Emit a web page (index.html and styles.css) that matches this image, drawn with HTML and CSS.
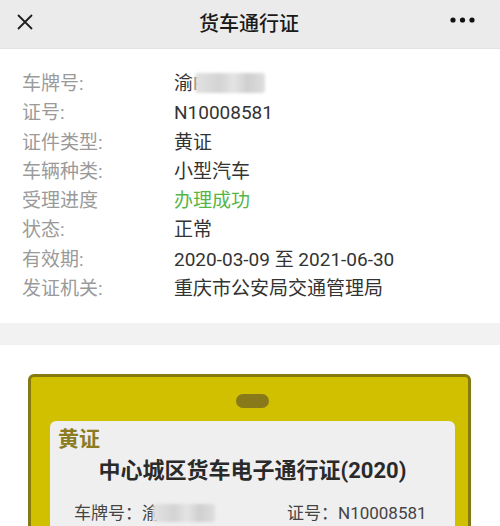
FILE: index.html
```html
<!DOCTYPE html>
<html lang="zh-CN">
<head>
  <meta charset="UTF-8" />
  <meta name="viewport" content="width=device-width, initial-scale=1.0" />
  <title>货车通行证</title>
  <link rel="stylesheet" href="styles.css">
</head>
<body>
  <div class="topbar">
    <svg class="close" width="18" height="18" viewBox="0 0 18 18">
      <path d="M2 2 L16 16 M16 2 L2 16" stroke="#1e1e1e" stroke-width="1.8" fill="none" />
    </svg>
    <div class="title">货车通行证</div>
    <svg class="more" width="26" height="8" viewBox="0 0 26 8">
      <circle cx="3" cy="4" r="2.6" fill="#111" />
      <circle cx="12.5" cy="4" r="2.6" fill="#111" />
      <circle cx="22" cy="4" r="2.6" fill="#111" />
    </svg>
  </div>

  <div class="info">
    <div class="label">车牌号:</div>
    <div class="value">渝F<span class="mask"></span></div>
    <div class="label">证号:</div>
    <div class="value">N10008581</div>
    <div class="label">证件类型:</div>
    <div class="value">黄证</div>
    <div class="label">车辆种类:</div>
    <div class="value">小型汽车</div>
    <div class="label">受理进度</div>
    <div class="value ok">办理成功</div>
    <div class="label">状态:</div>
    <div class="value">正常</div>
    <div class="label">有效期:</div>
    <div class="value">2020-03-09 至 2021-06-30</div>
    <div class="label">发证机关:</div>
    <div class="value">重庆市公安局交通管理局</div>
  </div>

  <div class="gap"></div>

  <div class="pass-wrap">
    <div class="pass">
      <div class="slot"></div>
      <div class="pass-body">
        <div class="kind">黄证</div>
        <div class="pass-title">中心城区货车电子通行证(2020)</div>
        <div class="pass-row">
          <span>车牌号：渝<span class="mask small"></span></span>
          <span class="pass-no">证号：N10008581</span>
        </div>
      </div>
    </div>
  </div>
</body>
</html>
```

FILE: styles.css
```css
html, body {
  overflow: hidden;
}
body {
  margin: 0;
  font-family: Roboto, "Noto Sans CJK SC", sans-serif;
  background: #fff;
  color: #333;
}
.topbar {
  height: 48px;
  background: #ebebeb;
  display: flex;
  align-items: center;
  justify-content: space-between;
  padding: 0 24px 0 16px;
  border-bottom: 1px solid #e2e2e2;
}
.close {
  margin-top: -4px;
}
.title {
  font-size: 20px;
  font-weight: 500;
  color: #1a1a1a;
  margin-left: 14px;
  margin-top: -4px;
}
.more {
  margin-top: -8px;
}
.info {
  display: grid;
  grid-template-columns: 152px 1fr;
  padding: 20px 0 20px 22px;
  font-size: 19px;
  line-height: 29.3px;
}
.label {
  color: #9a9a9a;
}
.value {
  color: #333;
}
.ok {
  color: #55b647;
}
.mask {
  display: inline-block;
  width: 70px;
  height: 20px;
  vertical-align: -3px;
  margin-left: -9px;
  background: linear-gradient(90deg, #e2e2e2 0%, #d3d3d3 35%, #e4e4e4 55%, #cfcfcf 75%, #dedede 100%);
  filter: blur(1.5px);
  border-radius: 3px;
}
.gap {
  height: 22px;
  background: #f2f2f2;
}
.pass-wrap {
  padding: 29px 29px 0 28px;
}
.pass {
  background: #d1c000;
  border: 3px solid #857911;
  border-radius: 6px;
  padding: 17px 13px 40px 19px;
}
.slot {
  width: 33px;
  height: 14px;
  margin: 0 auto 13px;
  border-radius: 7px;
  background: #887a1a;
}
.pass-body {
  background: #efefef;
  border-radius: 6px;
  padding: 4px 24px 30px 8px;
}
.kind {
  font-size: 21px;
  font-weight: 700;
  color: #8b7d1f;
  line-height: 28px;
}
.pass-title {
  text-align: center;
  font-size: 22px;
  font-weight: 700;
  color: #2a2a2a;
  line-height: 34px;
  margin: 1px -16px 0 0;
}
.pass-row {
  display: grid;
  grid-template-columns: 213px 1fr;
  padding-left: 16px;
  font-size: 17px;
  line-height: 30px;
  color: #444;
  margin-top: 10px;
}
.mask.small {
  width: 62px;
  height: 18px;
  margin-left: -6px;
}
```
